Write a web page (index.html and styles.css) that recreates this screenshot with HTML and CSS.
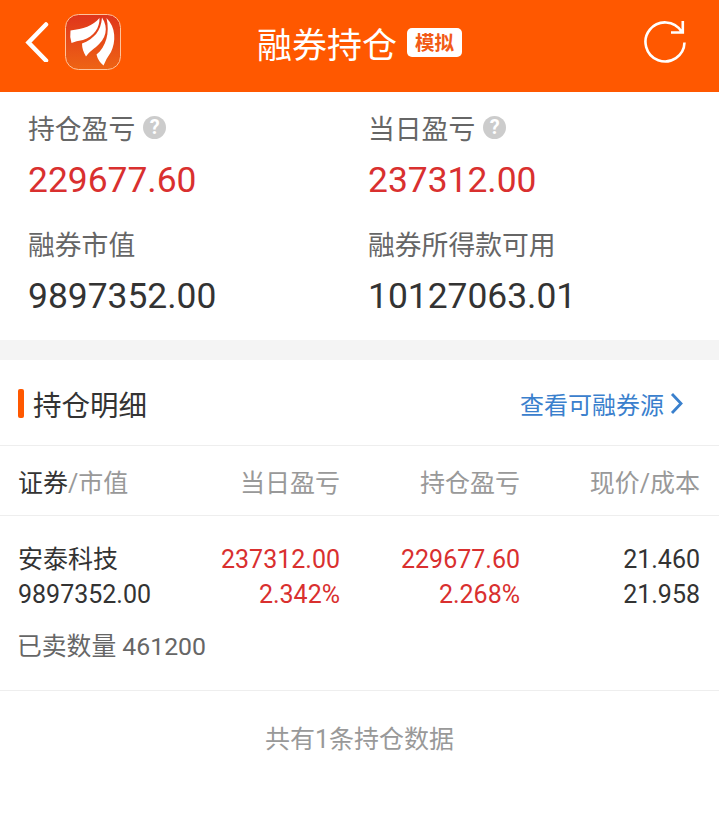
FILE: index.html
```html
<!DOCTYPE html>
<html lang="zh-CN">
<head>
    <meta charset="UTF-8">
    <meta name="viewport" content="width=device-width, initial-scale=1.0">
    <title>融券持仓</title>
    <link rel="stylesheet" href="styles.css">
</head>
<body>

<header class="topbar">
    <div class="topbar-left">
        <svg class="back" viewBox="0 0 24 40"><path d="M21 2.500 3.500 20.500 21 38.500" fill="none" stroke="#fff" stroke-width="4.5" stroke-linecap="round"/></svg>
        <svg class="logo" viewBox="0 0 56 56">
            <defs>
                <linearGradient id="logoBg" x1="0" y1="0" x2="0" y2="1">
                    <stop offset="0" stop-color="#df351c"/>
                    <stop offset="1" stop-color="#ee6414"/>
                </linearGradient>
            </defs>
            <rect x=".5" y=".5" width="55" height="55" rx="13" fill="url(#logoBg)" stroke="#ffc39a"/>
            <path d="M5.500 16.500C18 15 28 12 34.500 4 35 13 29 23 18 26Q11 27 6.500 29 4.500 23 5.500 16.500Z" fill="#fff"/>
            <path d="M17 29.500C29 25 36 17 37 3.500 44 14 41 25 31 33Q24 38 21 42.500 17 36 17 29.500Z" fill="#fff"/>
            <path d="M31.500 40.500C41 33 45 19 41.500 4 51 13 51 28 46 38Q41 45 38.500 51.500 33 47 31.500 40.500Z" fill="#fff"/>
        </svg>
    </div>
    <h1>融券持仓</h1>
    <span class="tag">模拟</span>
    <svg class="refresh" viewBox="0 0 44 44"><path d="M40.500 22.500A19.500 19.500 0 1 1 37.500 11.500M38.800 1v11.500H27" fill="none" stroke="#fff" stroke-width="2.600"/></svg>
</header>

<section class="summary">
    <div class="summary-item">
        <div class="label">持仓盈亏 <span class="help">?</span></div>
        <div class="value red">229677.60</div>
    </div>
    <div class="summary-item">
        <div class="label">当日盈亏 <span class="help">?</span></div>
        <div class="value red">237312.00</div>
    </div>
    <div class="summary-item">
        <div class="label">融券市值</div>
        <div class="value">9897352.00</div>
    </div>
    <div class="summary-item">
        <div class="label">融券所得款可用</div>
        <div class="value">10127063.01</div>
    </div>
</section>

<section class="detail">
    <div class="detail-head">
        <h2>持仓明细</h2>
        <a class="more" href="#">查看可融券源<svg class="arrow" viewBox="0 0 14 22"><path d="m2 1 9 9.500L2 20" fill="none" stroke="currentColor" stroke-width="2.8"/></svg></a>
    </div>
    <div class="row columns">
        <div><span class="dark">证券</span>/市值</div>
        <div>当日盈亏</div>
        <div>持仓盈亏</div>
        <div>现价/成本</div>
    </div>
    <div class="holding">
        <div class="row">
            <div>安泰科技<br>9897352.00</div>
            <div class="red">237312.00<br>2.342%</div>
            <div class="red">229677.60<br>2.268%</div>
            <div>21.460<br>21.958</div>
        </div>
        <div class="sold">已卖数量 461200</div>
    </div>
    <p class="total">共有1条持仓数据</p>
</section>

</body>
</html>
```
FILE: styles.css
```css
* {
    box-sizing: border-box;
}
body {
    margin: 0;
    font-family: Roboto, "Noto Sans CJK SC", sans-serif;
    background-color: #fff;
    color: #333;
}
h1, h2, p {
    margin: 0;
    font-weight: normal;
}
.topbar {
    height: 92px;
    padding: 0 31px 8px 25px;
    background-color: #ff5800;
    color: #fff;
    display: grid;
    grid-template-columns: 232px 140px 1fr 44px;
    align-items: center;
}
.topbar-left {
    display: flex;
    align-items: center;
    gap: 16px;
}
.back {
    width: 24px;
    height: 40px;
}
.logo {
    width: 56px;
    height: 56px;
}
.topbar h1 {
    padding-top: 10px;
    font-size: 35px;
    line-height: 50px;
}
.tag {
    justify-self: start;
    margin-left: 10px;
    width: 55px;
    height: 29px;
    padding-top: 1px;
    border-radius: 5px;
    background-color: #fff;
    color: #f25a16;
    font-size: 19.5px;
    font-weight: bold;
    line-height: 29px;
    text-align: center;
}
.refresh {
    width: 44px;
    height: 44px;
}
.summary {
    height: 268px;
    padding: 17px 28px 0;
    border-bottom: 20px solid #f4f4f4;
    display: grid;
    grid-template-columns: 340px 1fr;
    grid-auto-rows: 116px;
}
.label {
    display: flex;
    align-items: center;
    gap: 8px;
    height: 36px;
    font-size: 26.8px;
    color: #666;
}
.help {
    width: 23px;
    height: 23px;
    border-radius: 50%;
    background-color: #ccc;
    color: #fff;
    font-size: 20px;
    font-weight: bold;
    line-height: 23px;
    text-align: center;
}
.value {
    height: 70px;
    line-height: 70px;
    font-size: 35.4px;
}
.red {
    color: #d9302f;
}
.detail-head {
    height: 86px;
    padding: 2px 35px 0 18px;
    border-bottom: 1px solid #eee;
    display: flex;
    align-items: center;
    justify-content: space-between;
}
h2 {
    display: flex;
    align-items: center;
    font-size: 28.5px;
}
h2::before {
    content: "";
    width: 6px;
    height: 29px;
    margin-right: 9px;
    border-radius: 2px;
    background-color: #ff5800;
}
.more {
    display: flex;
    align-items: center;
    gap: 6px;
    font-size: 24px;
    color: #3a80cd;
    text-decoration: none;
}
.arrow {
    width: 14px;
    height: 22px;
}
.row {
    padding: 0 19px 0 18px;
    display: grid;
    grid-template-columns: 142px 180px 180px 180px;
    font-size: 25px;
    line-height: 35px;
    text-align: right;
}
.row > :first-child {
    text-align: left;
    white-space: nowrap;
}
.columns {
    height: 70px;
    padding-top: 20px;
    border-bottom: 1px solid #eee;
    color: #999;
}
.dark {
    color: #333;
}
.holding {
    height: 175px;
    padding-top: 26px;
    border-bottom: 1px solid #eee;
}
.sold {
    padding: 17px 17px 0;
    font-size: 24.8px;
    line-height: 36px;
    color: #666;
}
.total {
    padding-top: 31px;
    font-size: 25px;
    line-height: 36px;
    text-align: center;
    color: #999;
}
```
